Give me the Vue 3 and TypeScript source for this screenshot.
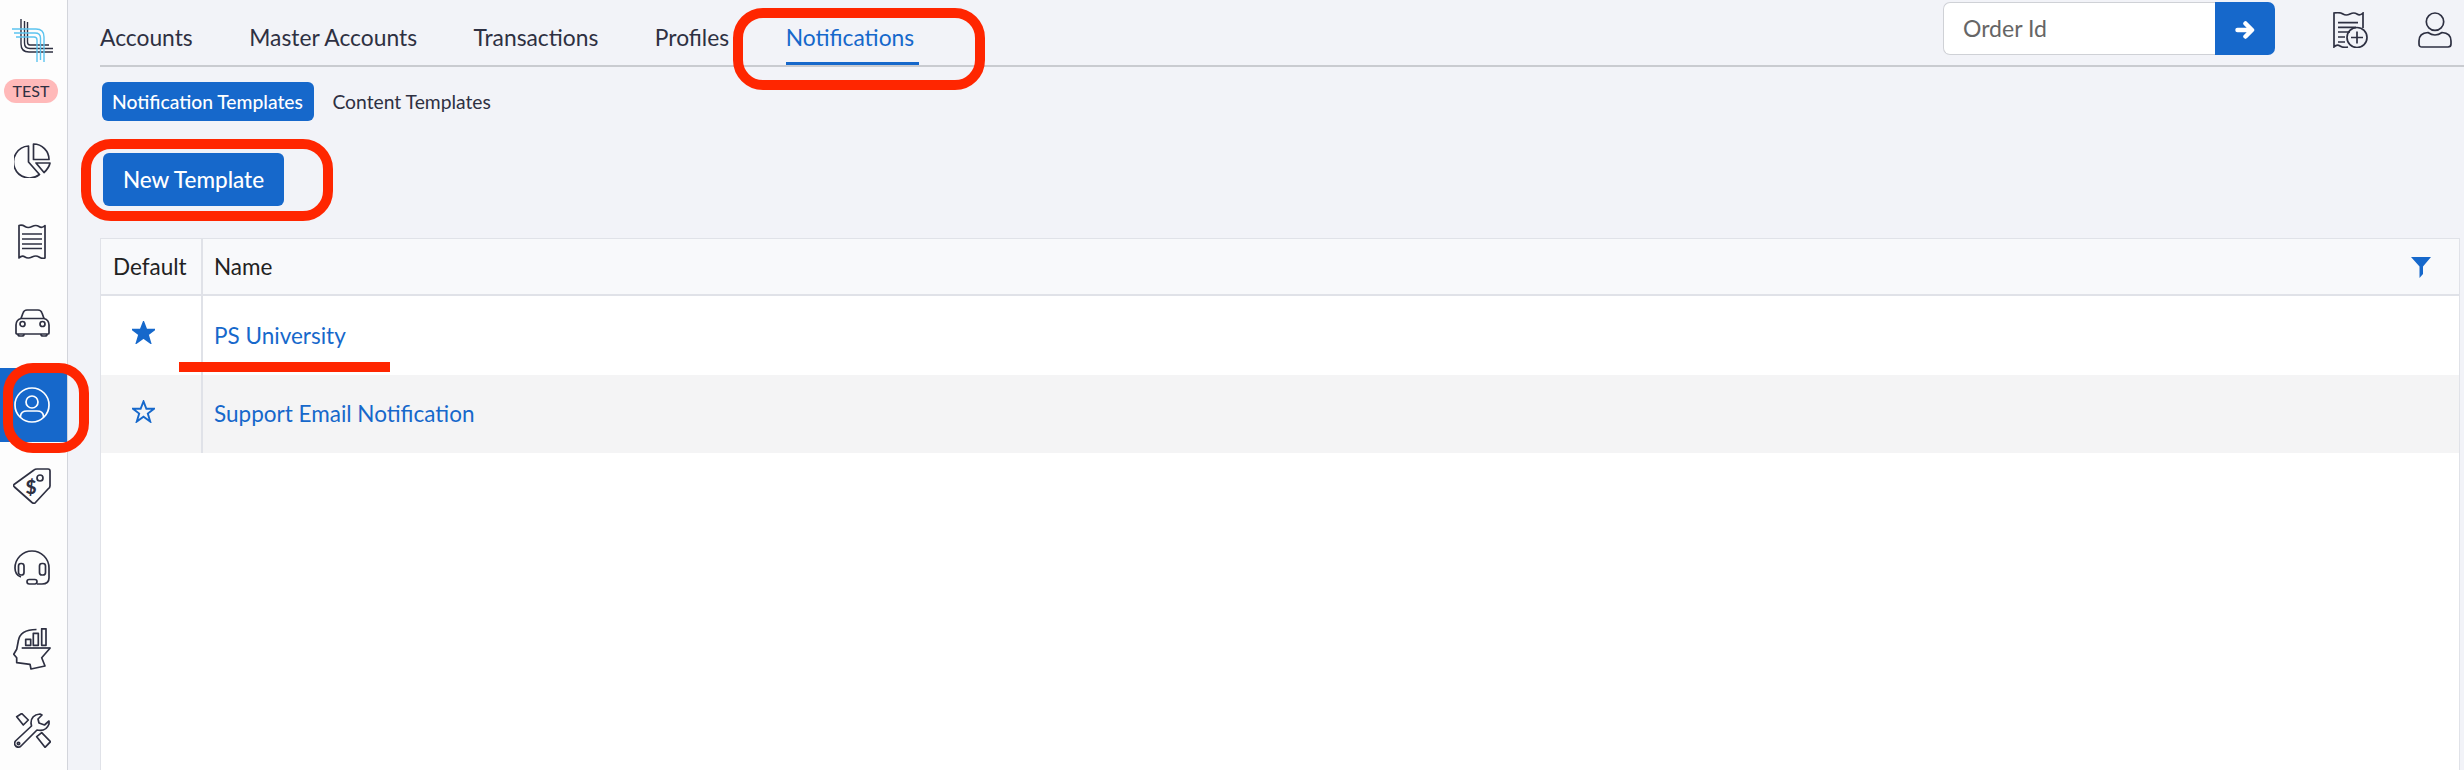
<script setup lang="ts">
const tabs: string[] = ['Accounts', 'Master Accounts', 'Transactions', 'Profiles', 'Notifications']
const rows = [
  { name: 'PS University', on: true },
  { name: 'Support Email Notification', on: false },
]
</script>

<template>
  <div class="page">
    <aside class="side">
      <svg class="logo" viewBox="0 0 42 44" fill="none">
        <g stroke="#2e3042" stroke-width="1.4">
          <path d="M9 1V26Q9 34 17 34H41" />
          <path d="M12.500 3V25Q12.500 30.500 18 30.500H41" />
          <path d="M15.500 4V24Q15.500 27 18 27H37" />
        </g>
        <g stroke="#5cc4ef" stroke-width="1.4">
          <path d="M0 11H24Q32 11 32 19V44" />
          <path d="M2 15H23Q28.500 15 28.500 20V42" />
          <path d="M4 19H22Q25 19 25 22V44" />
        </g>
      </svg>
      <div class="badge">TEST</div>
      <nav class="nav">
        <div class="item">
          <svg width="37" height="35" viewBox="0 0 37 35" class="ic"><path d="M14.500 3A16 16 0 1 0 25.500 31.500L14.500 19Z" /><path d="M19.500 1A15.500 15.500 0 0 1 35 16.500H19.500Z" /><path d="M22 20H36Q35 25 30 29.500Z" /></svg>
        </div>
        <div class="item">
          <svg width="28" height="35" viewBox="0 0 28 35" class="ic"><path d="M1 1.500V34Q4 31 7 33T14 33T21 33T27 34V1.500Q24 4.500 21 2.500T14 2.500T7 2.500T1 1.500Z" /><path d="M4 10H24M4 15H24M4 20H24M4 24.500H24" /></svg>
        </div>
        <div class="item">
          <svg width="35" height="28" viewBox="0 0 35 28" class="ic"><path d="M1 24V16Q1 11 6 9.500H29Q34 11 34 16V24Q34 25 33 25H2Q1 25 1 24Z" /><path d="M6 9.500L8 4Q9 1 12 1H23Q26 1 27 4L29 9.500" /><circle cx="7.500" cy="15" r="2.500" /><circle cx="27.500" cy="15" r="2.500" /><path d="M3 25V25.500Q3 27 5 27H7Q9 27 9 25.500V25M26 25V25.500Q26 27 28 27H30Q32 27 32 25.500V25" /></svg>
        </div>
        <div class="item active">
          <svg width="36" height="36" viewBox="0 0 36 36" class="ic"><circle cx="18" cy="18" r="17" /><circle cx="18" cy="15" r="6" /><path d="M6.500 30V29Q7 24 13 24H23Q29 24 29.500 29V30" /></svg>
        </div>
        <div class="item">
          <svg width="38" height="36" viewBox="0 0 38 36" class="ic"><path d="M1 16.500L21 2Q22 1 24 1H35Q37 1 37 3V18Q37 20 35 21L22 35Q21 36 19 34.500L1.500 19Q0 17.500 1 16.500Z" /><circle cx="27" cy="10" r="3" /><text x="18" y="26" class="dollar" text-anchor="middle">$</text></svg>
        </div>
        <div class="item">
          <svg width="36" height="35" viewBox="0 0 36 35" class="ic"><path d="M7 27Q1 25 1 18A17 17 0 0 1 35 18V28Q35 34 28 34H23" /><rect x="4.500" y="13.500" width="5.500" height="11.500" rx="2.500" /><rect x="25.500" y="13.500" width="6" height="11.500" rx="2.500" /><rect x="13" y="29.500" width="10" height="4.500" rx="2.200" /></svg>
        </div>
        <div class="item">
          <svg width="38" height="42" viewBox="0 0 38 42" class="ic"><path d="M23.500 1.500Q7 1.500 5.300 13L3.700 21.300L.7 26.300L3.700 29.700V34.700L17 36.300L18 41L32 38L28.700 29.700L37 20.300" /><path d="M8.700 20H37.700" /><path d="M12.700 11.300H17.700V17.300H12.700ZM20.300 5.300H25.300V17.300H20.300ZM28.700 .8H33V17.300H28.700Z" /></svg>
        </div>
        <div class="item">
          <svg width="37" height="35" viewBox="0 0 37 35" class="ic"><path d="M26 1Q17 2 17 10L17.500 13L1.500 28Q0 30 1 32Q3 35.500 6.500 33.500L23 17Q32 19 35 11V8L30.500 12L25 10L24 6L28 2Z" /><circle cx="4.500" cy="30.500" r="1.200" /><path d="M2.700 3.700L7.700 .5L14.300 7L9.300 12ZM22.700 23.700L27.700 19.700L36.500 28.700L31 34.300Z" /></svg>
        </div>
      </nav>
    </aside>

    <main class="main">
      <header class="top">
        <div class="tabs">
          <a v-for="t in tabs" :key="t" class="tab" :class="{ current: t === 'Notifications' }">{{ t }}</a>
        </div>
        <div class="tools">
          <div class="search">
            <div class="input">Order Id</div>
            <button class="go">
              <svg viewBox="0 0 20 20" width="20" height="20" fill="none" stroke="#fff" stroke-width="4.500" stroke-linecap="round" stroke-linejoin="round"><path d="M2.500 10H15M10.500 3.500L17 10L10.500 16.500" /></svg>
            </button>
          </div>
          <svg class="tool-ic first" viewBox="0 0 35 36" fill="none" stroke="#2e3042" stroke-width="1.700"><path d="M30 16V1Q27 4 24 2T17 2T10 2T1 1V35Q4 32 7 34T15 35" /><path d="M5 10.700H25M5 15.300H23M5 20H17M5 25H12M5 30H12" /><circle cx="24" cy="25.500" r="10" /><path d="M24 19.500V31.500M18 25.500H30" /></svg>
          <svg class="tool-ic" viewBox="0 0 34 36" fill="none" stroke="#2e3042" stroke-width="1.700"><circle cx="17" cy="9.700" r="8.700" /><path d="M4 35Q1 35 1 32V29Q1 21 10 20.500Q13.500 23 17 23Q20.500 23 24 20.500Q33 21 33 29V32Q33 35 30 35Z" /></svg>
        </div>
      </header>

      <div class="pills">
        <span class="pill on">Notification Templates</span>
        <span class="pill">Content Templates</span>
      </div>

      <button class="new">New Template</button>

      <section class="table">
        <div class="row head">
          <div class="c1 title">Default</div>
          <div class="c2">Name</div>
          <svg class="filter" viewBox="0 0 20 21"><path d="M0 0H20L12 9.500V17L8.500 21V9.500Z" fill="#1668cb" /></svg>
        </div>
        <div v-for="(r, i) in rows" :key="r.name" class="row body" :class="{ alt: i % 2 === 1 }">
          <div class="c1">
            <svg class="star" viewBox="0 0 24 24">
              <path d="M12 1.500L15 9.200H23L16.500 14.200L19 22.500L12 17.500L5 22.500L7.500 14.200L1 9.200H9Z" :fill="r.on ? '#1668cb' : 'none'" stroke="#1668cb" stroke-width="2" />
            </svg>
          </div>
          <a class="c2 link">{{ r.name }}</a>
        </div>
      </section>
    </main>

    <i class="mark m-tab"></i>
    <i class="mark m-new"></i>
    <i class="mark m-user"></i>
    <i class="under"></i>
  </div>
</template>

<style>
html, body { margin: 0; padding: 0; background: #f2f3f8; }
</style>

<style scoped>
.page {
  position: relative;
  display: flex;
  width: 2464px;
  height: 770px;
  overflow: hidden;
  background: #f2f3f8;
  font-family: Lato, "Open Sans", sans-serif;
  color: #2e3042;
}
.side {
  width: 67px;
  flex: none;
  background: #fdfdfd;
  border-right: 1px solid #d3d5db;
  display: flex;
  flex-direction: column;
  align-items: center;
}
.logo { width: 42px; height: 44px; margin: 18px 0 0 -2px; flex: none; }
.badge {
  margin: 17px 0 0 -5px;
  width: 54px;
  height: 24px;
  line-height: 24px;
  background: #ffb9b9;
  border-radius: 12px;
  text-align: center;
  font-size: 16px;
  color: #2e3042;
}
.nav { display: flex; flex-direction: column; gap: 7.5px; width: 100%; margin-top: 20px; }
.item { height: 74px; display: flex; align-items: center; justify-content: center; padding-right: 3px; }
.ic { fill: none; stroke: #2e3042; stroke-width: 1.700; stroke-linejoin: round; }
.dollar { font: 900 19px Lato, sans-serif; fill: #2e3042; stroke: none; }
.item.active { background: #1668cb; }
.item.active .ic { stroke: #fff; }

.main { flex: 1; min-width: 0; padding: 0 4px 0 32px; display: flex; flex-direction: column; }
.top {
  height: 65px;
  flex: none;
  border-bottom: 2px solid #c9cbd0;
  margin-right: -4px;
  display: flex;
  justify-content: space-between;
}
.tabs { display: flex; gap: 56.500px; }
.tab { font-size: 22.800px; line-height: 74px; height: 65px; position: relative; color: #2e3042; }
.tab.current { color: #1668cb; }
.tab.current::after {
  content: "";
  position: absolute;
  left: 0;
  right: -5px;
  bottom: 0;
  height: 3px;
  background: #1668cb;
}
.tools { display: flex; align-items: flex-start; padding: 2px 12px 0 0; }
.search { display: flex; height: 53px; }
.input {
  width: 272px;
  box-sizing: border-box;
  border: 1px solid #cfd1d6;
  border-right: 0;
  border-radius: 7px 0 0 7px;
  background: #fff;
  padding-left: 19px;
  font-size: 23px;
  line-height: 51px;
  color: #666;
}
.go {
  width: 60px;
  border: 0;
  padding: 3px 0 0;
  background: #1668cb;
  border-radius: 0 7px 7px 0;
  display: flex;
  align-items: center;
  justify-content: center;
}
.tool-ic { flex: none; margin-top: 10px; }
.tool-ic.first { width: 35px; height: 36px; margin-left: 58px; }
.tool-ic:not(.first) { width: 34px; height: 36px; margin-left: 50px; }

.pills { display: flex; gap: 8.500px; margin: 15px 0 0 2px; }
.pill { font-size: 19.300px; line-height: 39px; height: 39px; padding: 0 11px 0 10px; border-radius: 6px; color: #2e3042; }
.pill.on { background: #1668cb; color: #fff; font-weight: 500; }

.new {
  align-self: flex-start;
  margin: 32px 0 32px 3px;
  width: 181px;
  height: 53px;
  border: 0;
  border-radius: 6px;
  background: #1668cb;
  color: #fff;
  font: 500 22.500px Lato, sans-serif;
}
.table { flex: 1; background: #fff; border: 1px solid #e0e2e8; border-bottom: 0; }
.row { display: flex; position: relative; }
.head { height: 55px; background: #f8f9fb; border-bottom: 2px solid #e0e2e8; align-items: stretch; color: #222; font-size: 22.500px; }
.body { height: 78.500px; background: #fff; }
.body.alt { background: #f4f4f5; }
.c1 { width: 102px; flex: none; box-sizing: border-box; border-right: 2px solid #e0e2e8; display: flex; align-items: center; justify-content: center; padding-right: 16px; }
.c1.title { justify-content: flex-start; padding: 0 0 0 12px; }
.c2 { padding-left: 11px; display: flex; align-items: center; }
.link { color: #1668cb; font-size: 22.500px; }
.star { width: 23px; height: 23px; margin-bottom: 5px; }
.filter { position: absolute; right: 28px; top: 18px; width: 20px; height: 21px; }

.mark { position: absolute; box-sizing: border-box; border: 10px solid #ff2600; border-radius: 30px; pointer-events: none; }
.m-tab { left: 733px; top: 8px; width: 252px; height: 82px; }
.m-new { left: 81px; top: 139px; width: 252px; height: 82px; }
.m-user { left: 3px; top: 363px; width: 86px; height: 90px; }
.under { position: absolute; left: 179px; top: 362px; width: 211px; height: 10px; background: #ff2600; }
</style>
